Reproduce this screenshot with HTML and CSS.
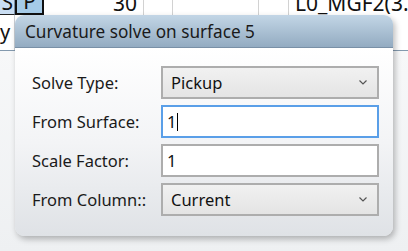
FILE: index.html
```html
<!DOCTYPE html>
<html>
	<head>
		<meta charset="UTF-8">
		<title>Curvature solve</title>
		<link rel="stylesheet" href="styles.css">
	</head>
	<body>
		<div class="sheet">
			<div class="row top">
				<div class="cell c0">S</div>
				<div class="cell c1">P</div>
				<div class="cell c2">30</div>
				<div class="cell c3"></div>
				<div class="cell c4"></div>
				<div class="cell c5"></div>
				<div class="cell c6">L0_MGF2(3.5</div>
			</div>
			<div class="row second">
				<div class="cell c0b">y</div>
				<div class="cell rest"></div>
			</div>
			<div class="row below"></div>
		</div>

		<div class="dialog">
			<div class="head">Curvature solve on surface 5</div>
			<div class="body">
				<div class="form">
					<label>Solve Type:</label>
					<div class="select"><span>Pickup</span><svg width="8" height="5" viewBox="0 0 8 5"><polyline points="0.5,0.5 4,4 7.5,0.5" fill="none" stroke="#555" stroke-width="1.2"/></svg></div>

					<label>From Surface:</label>
					<div class="input focus"><span>1</span><i class="caret"></i></div>

					<label>Scale Factor:</label>
					<div class="input"><span>1</span></div>

					<label>From Column::</label>
					<div class="select"><span>Current</span><svg width="8" height="5" viewBox="0 0 8 5"><polyline points="0.5,0.5 4,4 7.5,0.5" fill="none" stroke="#555" stroke-width="1.2"/></svg></div>
				</div>
			</div>
		</div>
	</body>
</html>
```

FILE: styles.css
```css
body{
	margin: 0;
	width: 408px;
	height: 251px;
	overflow: hidden;
	position: relative;
	font-family: "Noto Sans", "Open Sans", sans-serif;
	background: #f3f4f6;
}
.sheet{
	display: flex;
	flex-direction: column;
	height: 251px;
}
.row{
	display: flex;
}
.top{
	height: 15px;
	background: #fff;
	overflow: hidden;
}
.cell{
	box-sizing: border-box;
	font-size: 21px;
	line-height: 24px;
	color: #111;
	display: flex;
	align-items: flex-end;
	overflow: hidden;
}
.top .cell{
	height: 15px;
	border-right: 1px solid #d2d2d2;
}
.c0{
	width: 15px;
	background: #c9ddf2;
	border-bottom: 1px solid #222;
	justify-content: flex-end;
	padding-right: 1px;
}
.top .c0{
	border-right: 1px solid #7a8ea3;
}
.c1{
	width: 29px;
	background: #a5cbe8;
	border: 2px solid #111 !important;
	border-top: 0 !important;
	justify-content: center;
}
.c2{
	width: 100px;
	justify-content: flex-end;
	padding-right: 6px;
}
.c3{
	width: 29px;
}
.c4{
	width: 86px;
}
.c5{
	width: 30px;
}
.c6{
	flex: 1;
	padding-left: 6px;
	border-right: 0 !important;
	white-space: nowrap;
}
.second{
	height: 35px;
	background: #fff;
	border-bottom: 1px solid #8399ae;
}
.c0b{
	width: 15px;
	border-right: 1px solid #c9ced4;
	font-size: 20px;
	line-height: 24px;
	align-items: center;
	padding-bottom: 2px;
}
.rest{
	flex: 1;
}
.below{
	flex: 1;
	background: linear-gradient(#f7f8f9, #eef0f2);
}

.dialog{
	position: absolute;
	left: 15px;
	top: 15px;
	width: 378px;
	height: 221px;
	border-radius: 9px;
	overflow: hidden;
	box-shadow: 2px 3px 6px rgba(0, 0, 0, 0.28);
	display: flex;
	flex-direction: column;
}
.head{
	height: 33px;
	box-sizing: border-box;
	padding-left: 10px;
	font-size: 17.2px;
	line-height: 33px;
	color: #1a1a1a;
	background: linear-gradient(#c3d6e6, #93abc1);
	border-bottom: 1px solid #7990a6;
}
.body{
	flex: 1;
	background: linear-gradient(#ffffff, #f3f4f6 50%, #dfe2e6);
	padding: 18px 14px 0 17px;
}
.form{
	display: grid;
	grid-template-columns: 129px 1fr;
	grid-auto-rows: 33px;
	row-gap: 6px;
	align-items: center;
}
label{
	font-size: 16.5px;
	color: #1a1a1a;
}
.select, .input{
	box-sizing: border-box;
	height: 33px;
	border: 2px solid #adadad;
	display: flex;
	align-items: center;
	padding: 0 10px 0 8px;
	font-size: 16.5px;
	color: #111;
}
.select{
	justify-content: space-between;
	background: linear-gradient(#f1f1f1, #e4e4e4);
}
.input{
	background: #fff;
	padding-left: 4px;
}
.input.focus{
	border-color: #5a9fe8;
}
.caret{
	display: block;
	width: 1px;
	height: 18px;
	background: #000;
	margin-left: 1px;
}
```
